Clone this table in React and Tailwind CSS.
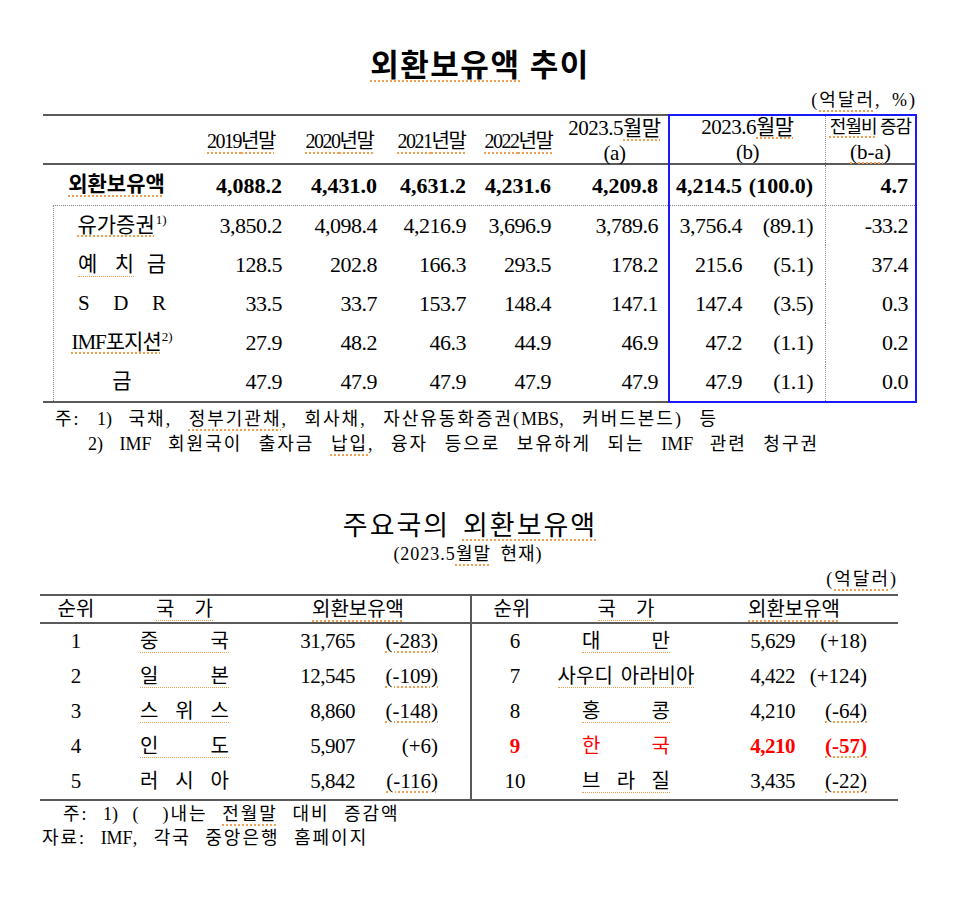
import React from "react";

const U = ({ children, className = "" }) => (
  <span
    className={
      "underline decoration-dotted decoration-[#f0a050] decoration-[1.5px] underline-offset-[4px] " +
      className
    }
  >
    {children}
  </span>
);

const L = ({ children }) => <span className="tracking-normal">{children}</span>;

const Name = ({ chars, ul = true }) => (
  <div
    className={
      "flex justify-between leading-[22px] " +
      (ul ? "border-b-[1.5px] border-dotted border-[#f0a050]" : "border-b-[1.5px] border-transparent")
    }
  >
    {chars.map((c, i) => (
      <span key={i}>{c}</span>
    ))}
  </div>
);

const dataRows = [
  {
    label: (
      <span className="whitespace-nowrap">
        <U>유가증권</U>
        <span className="text-[13px] relative -top-[8px] ml-[1px]">1)</span>
      </span>
    ),
    v: ["3,850.2", "4,098.4", "4,216.9", "3,696.9", "3,789.6"],
    b: "3,756.4",
    p: "(89.1)",
    d: "-33.2",
  },
  {
    label: (
      <div className="w-[88px] flex justify-between">
        <span className="border-b-[1.5px] border-dotted border-[#f0a050] flex justify-between w-[56px] leading-[24px]">
          <span>예</span>
          <span>치</span>
        </span>
        <span className="leading-[24px]">금</span>
      </div>
    ),
    v: ["128.5", "202.8", "166.3", "293.5", "178.2"],
    b: "215.6",
    p: "(5.1)",
    d: "37.4",
  },
  {
    label: (
      <div className="w-[88px] flex justify-between">
        <span>S</span>
        <span>D</span>
        <span>R</span>
      </div>
    ),
    v: ["33.5", "33.7", "153.7", "148.4", "147.1"],
    b: "147.4",
    p: "(3.5)",
    d: "0.3",
  },
  {
    label: (
      <span className="whitespace-nowrap">
        <U className="tracking-[-1px]">IMF포지션</U>
        <span className="text-[13px] relative -top-[8px] ml-[1px]">2)</span>
      </span>
    ),
    v: ["27.9", "48.2", "46.3", "44.9", "46.9"],
    b: "47.2",
    p: "(1.1)",
    d: "0.2",
  },
  {
    label: <span>금</span>,
    v: ["47.9", "47.9", "47.9", "47.9", "47.9"],
    b: "47.9",
    p: "(1.1)",
    d: "0.0",
  },
];

const left = [
  { r: "1", n: ["중", "국"], a: "31,765", c: "(-283)", cu: true },
  { r: "2", n: ["일", "본"], a: "12,545", c: "(-109)", cu: true },
  { r: "3", n: ["스", "위", "스"], a: "8,860", c: "(-148)", cu: true },
  { r: "4", n: ["인", "도"], a: "5,907", c: "(+6)", cu: false },
  { r: "5", n: ["러", "시", "아"], a: "5,842", c: "(-116)", cu: true, nu: false },
];

const right = [
  { r: "6", n: ["대", "만"], a: "5,629", c: "(+18)", cu: false },
  { r: "7", wide: "사우디 아라비아", a: "4,422", c: "(+124)", cu: false },
  { r: "8", n: ["홍", "콩"], a: "4,210", c: "(-64)", cu: true },
  { r: "9", n: ["한", "국"], a: "4,210", c: "(-57)", cu: true, red: true, nu: false },
  { r: "10", n: ["브", "라", "질"], a: "3,435", c: "(-22)", cu: true },
];

const LINE = "border-[#5a5a5a]";

export default function App() {
  return (
    <div className="w-[960px] h-[898px] bg-white text-black font-['Liberation_Serif','Noto_Sans_CJK_KR',serif] overflow-hidden">
      {/* Title 1 */}
      <div className="pt-[46px] h-[86px] text-center text-[31px] leading-[40px] font-semibold tracking-[1.5px]">
        <U>외환보유액</U> 추이
      </div>
      <div className="w-[917px] mt-[3px] h-[22px] text-right text-[18px] leading-[22px] tracking-[2px] [word-spacing:4px]">
        (<U>억달러</U>, %)
      </div>

      {/* Table 1 */}
      <div className="ml-[43px] mt-[3px] w-[874px] flex">
        <div className={"w-[625px] border-t-2 border-b-2 " + LINE}>
          {/* header */}
          <div className={"grid grid-cols-[147px_102px_95px_89px_85px_107px] h-[49px] border-b-2 items-center " + LINE}>
            <div />
            {["2019", "2020", "2021", "2022"].map((y) => (
              <div key={y} className="text-center text-[20px] tracking-[-1.5px] whitespace-nowrap">
                <U>{y}년말</U>
              </div>
            ))}
            <div className="flex flex-col items-center text-[21px] leading-[25px] tracking-[-0.5px]">
              <span className="whitespace-nowrap">
                2023.5<U>월말</U>
              </span>
              <span>(a)</span>
            </div>
          </div>
          {/* main row */}
          <div className="grid grid-cols-[147px_102px_95px_89px_85px_107px] h-[40px] items-center text-[22px] font-bold">
            <div className="text-center text-[21px]">
              <U>외환보유액</U>
            </div>
            {["4,088.2", "4,431.0", "4,631.2", "4,231.6", "4,209.8"].map((v, i) => (
              <div key={i} className="text-right pr-[10px]">
                {v}
              </div>
            ))}
          </div>
          {/* data */}
          <div className="ml-[10px] border-l border-t border-dotted border-[#8a8a8a]">
            {dataRows.map((r, i) => (
              <div key={i} className="grid grid-cols-[136px_102px_95px_89px_85px_107px] items-center text-[22px] h-[39px]">
                <div className="flex justify-center text-[21px]">{r.label}</div>
                {r.v.map((v, j) => (
                  <div key={j} className="text-right pr-[10px] tracking-[-0.5px]">
                    {v}
                  </div>
                ))}
              </div>
            ))}
          </div>
        </div>

        {/* blue box */}
        <div className="w-[249px] border-2 border-[#1a1aff]">
          <div className={"flex h-[49px] border-b-2 " + LINE}>
            <div className="w-[155px] flex flex-col items-center justify-center text-[21px] leading-[25px] tracking-[-0.5px]">
              <span className="whitespace-nowrap">
                2023.6<U>월말</U>
              </span>
              <span>(b)</span>
            </div>
            <div className="w-[90px] border-l border-dotted border-[#8a8a8a] flex flex-col items-center justify-center text-[18px] leading-[25px] whitespace-nowrap">
              <span className="tracking-[-1px]">
                <U>전월비</U> 증감
              </span>
              <span className="text-[21px]">
                <U>(b-a)</U>
              </span>
            </div>
          </div>
          <div className="flex h-[40px] items-center text-[22px] font-bold">
            <div className="w-[155px] flex">
              <span className="w-[72px] text-right">4,214.5</span>
              <span className="flex-1 text-right pr-[12px]">(100.0)</span>
            </div>
            <div className="w-[90px] h-full border-l border-dotted border-[#8a8a8a] flex items-center justify-end pr-[7px]">
              4.7
            </div>
          </div>
          <div className="border-t border-dotted border-[#8a8a8a]">
            {dataRows.map((r, i) => (
              <div key={i} className="flex items-center text-[22px] tracking-[-0.5px] h-[39px]">
                <div className="w-[155px] flex">
                  <span className="w-[72px] text-right">{r.b}</span>
                  <span className="flex-1 text-right pr-[12px]">{r.p}</span>
                </div>
                <div className="w-[90px] h-full border-l border-dotted border-[#8a8a8a] flex items-center justify-end pr-[7px]">
                  {r.d}
                </div>
              </div>
            ))}
          </div>
        </div>
      </div>

      {/* footnotes */}
      <div className="ml-[55px] mt-[4px] text-[18px] leading-[25px] tracking-[2px] [word-spacing:10px] whitespace-nowrap">
        <div>
          주: <L>1)</L> 국채, <U>정부기관채</U>, 회사채, 자산유동화증권(<L>MBS</L>, 커버드본드) 등
        </div>
        <div className="pl-[33px]">
          <L>2)</L> <L>IMF</L> 회원국이 출자금 <U>납입</U>, 융자 등으로 보유하게 되는 <L>IMF</L> 관련 청구권
        </div>
      </div>

      {/* Title 2 */}
      <div className="ml-[40px] w-[860px] mt-[52px] text-center text-[27px] leading-[34px] tracking-[2px] [word-spacing:4px]">
        주요국의 <U>외환보유액</U>
      </div>
      <div className="ml-[40px] w-[856px] text-center text-[18px] leading-[22px] tracking-[1px] [word-spacing:4px]">
        (2023.5<U>월말</U> 현재)
      </div>
      <div className="ml-[40px] w-[858px] mt-[3px] text-right text-[18px] leading-[22px] tracking-[2px]">
        (<U>억달러</U>)
      </div>

      {/* Table 2 */}
      <div className={"ml-[40px] mt-[4px] w-[858px] flex border-t-2 border-b-2 " + LINE}>
        {/* left half */}
        <div className="w-[430px]">
          <div className={"flex items-center h-[28px] border-b-2 text-[20px] " + LINE}>
            <div className="w-[72px] text-center">순위</div>
            <div className="w-[28px]" />
            <div className="w-[89px] flex justify-center">
              <span className="flex gap-[20px] border-b-[1.5px] border-dotted border-[#f0a050] leading-[22px]">
                <span>국</span>
                <span>가</span>
              </span>
            </div>
            <div className="w-[209px] pl-[83px]">
              <U>외환보유액</U>
            </div>
          </div>
          {left.map((r) => (
            <div key={r.r} className="flex items-center h-[35px] text-[21px]">
              <div className="w-[72px] text-center">{r.r}</div>
              <div className="w-[28px]" />
              <div className="w-[89px] text-[20px]">
                <Name chars={r.n} ul={r.nu !== false} />
              </div>
              <div className="w-[126px] text-right tracking-[-0.5px]">{r.a}</div>
              <div className="w-[83px] text-right">{r.cu ? <U>{r.c}</U> : r.c}</div>
            </div>
          ))}
        </div>
        {/* right half */}
        <div className={"w-[428px] border-l-2 " + LINE}>
          <div className={"flex items-center h-[28px] border-b-2 text-[20px] " + LINE}>
            <div className="w-[80px] text-center">순위</div>
            <div className="w-[30px]" />
            <div className="w-[88px] flex justify-center">
              <span className="flex gap-[20px] border-b-[1.5px] border-dotted border-[#f0a050] leading-[22px]">
                <span>국</span>
                <span>가</span>
              </span>
            </div>
            <div className="w-[197px] pl-[78px]">
              <U>외환보유액</U>
            </div>
          </div>
          {right.map((r) => (
            <div
              key={r.r}
              className={"flex items-center h-[35px] text-[21px] " + (r.red ? "text-[#ff0000]" : "")}
            >
              <div className={"w-[86px] text-center " + (r.red ? "font-bold" : "")}>{r.r}</div>
              <div className="w-[24px]" />
              <div className="w-[88px] text-[20px]">
                {r.wide ? (
                  <div className="flex justify-center whitespace-nowrap leading-[22px]">
                    <span className="border-b-[1.5px] border-dotted border-[#f0a050] [word-spacing:3px]">{r.wide}</span>
                  </div>
                ) : (
                  <Name chars={r.n} ul={r.nu !== false} />
                )}
              </div>
              <div className={"w-[125px] text-right tracking-[-0.5px] " + (r.red ? "font-bold" : "")}>{r.a}</div>
              <div className={"w-[72px] text-right " + (r.red ? "font-bold" : "")}>
                {r.cu ? <U>{r.c}</U> : r.c}
              </div>
            </div>
          ))}
        </div>
      </div>

      {/* bottom notes */}
      <div className="mt-[1px] text-[18px] leading-[24px] tracking-[2px] [word-spacing:8px] whitespace-nowrap">
        <div className="ml-[63px]">
          주: <L>1)</L> (<span className="inline-block w-[22px]" />)내는 <U>전월말</U> 대비 증감액
        </div>
        <div className="ml-[42px]">
          자료: <L>IMF</L>, 각국 중앙은행 홈페이지
        </div>
      </div>
    </div>
  );
}
